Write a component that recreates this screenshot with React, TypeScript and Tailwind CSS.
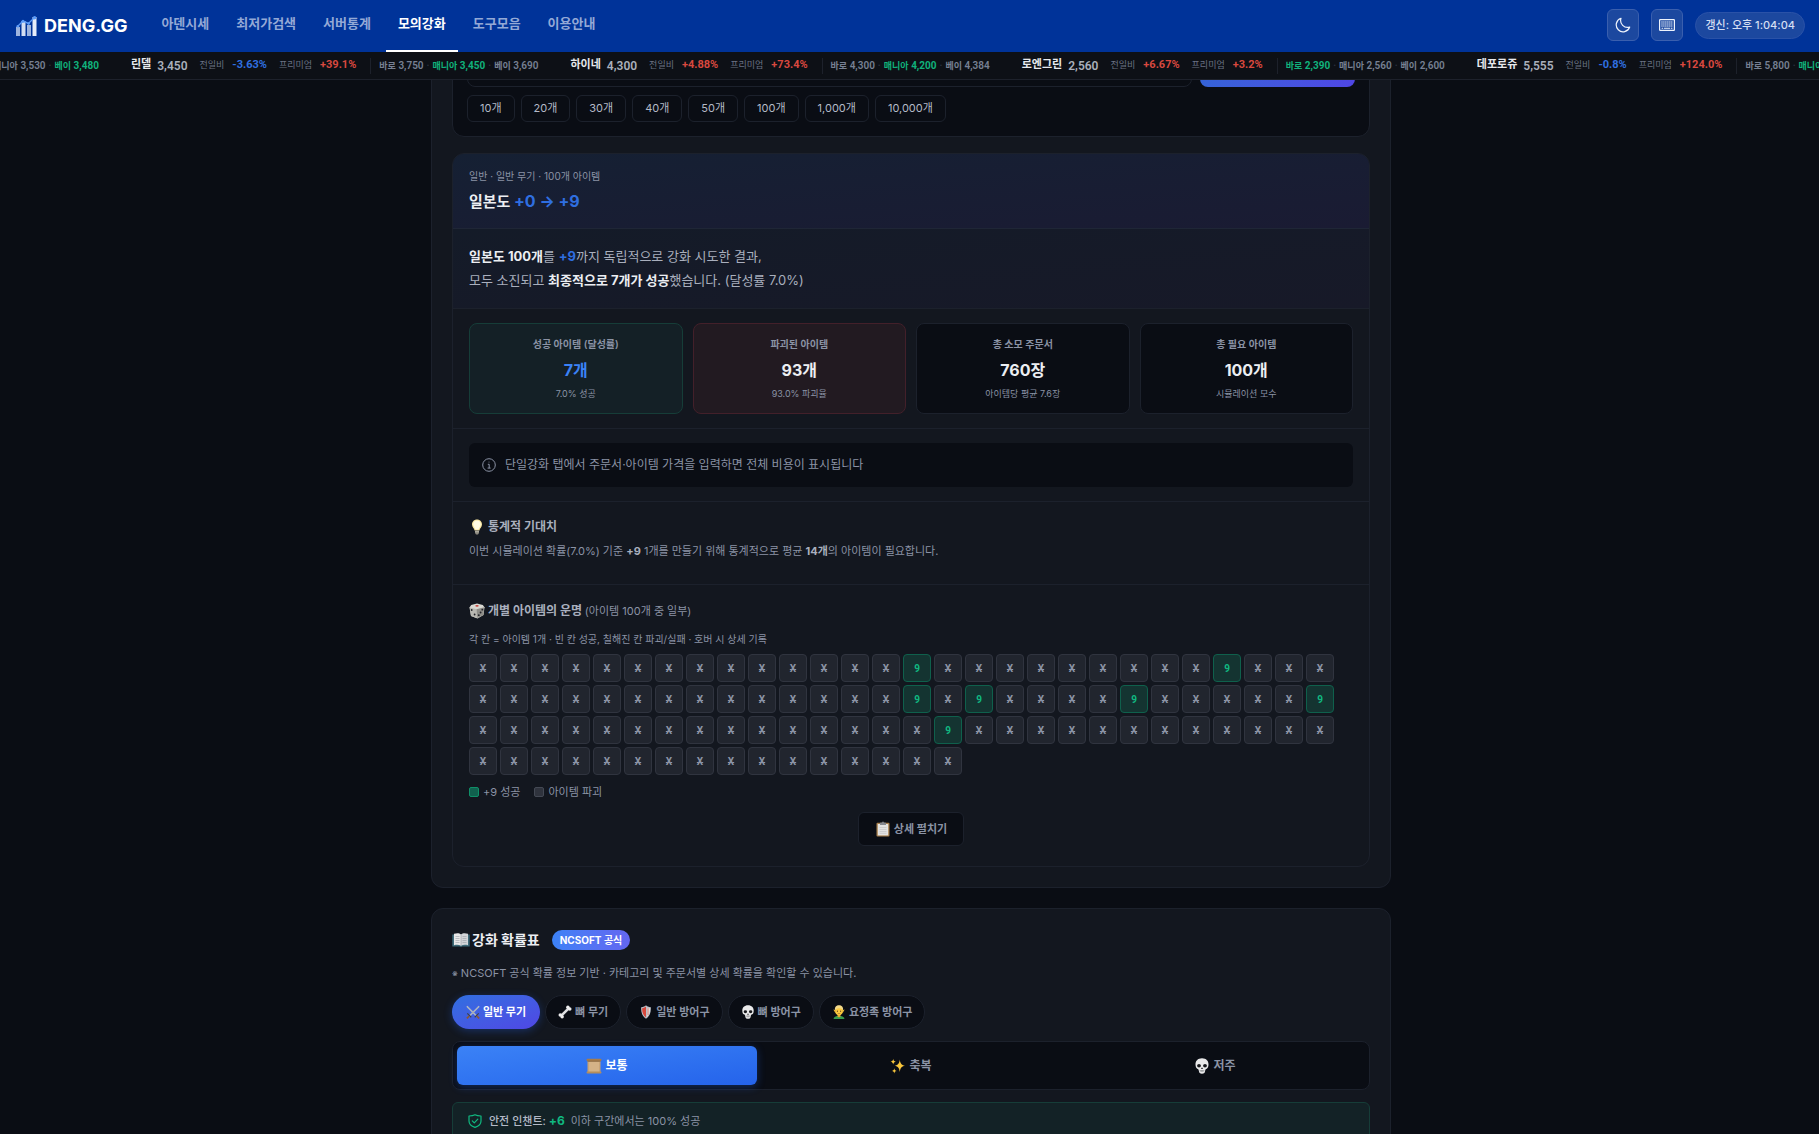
import React from "react";

const UI = "font-['Inter','Noto_Sans_CJK_KR',sans-serif]";
const NARROW = "font-['Roboto','Noto_Sans_CJK_KR',sans-serif]";

function Logo() {
  return (
    <svg viewBox="0 0 21 20" className="h-5 w-[21px]" aria-hidden="true">
      <rect x="0" y="11" width="4" height="9" fill="#9db4de" />
      <rect x="5.5" y="5" width="4" height="15" fill="#d3def2" />
      <rect x="11" y="9" width="4" height="11" fill="#9db4de" />
      <rect x="16.5" y="1" width="4" height="19" fill="#e6edf9" />
      <path d="M1.5 10.5 7 5l5.5 2.5L18.5 1.5" fill="none" stroke="#5b9bf8" strokeWidth="1.4" />
      <circle cx="1.8" cy="10.3" r="1.3" fill="#5b9bf8" />
      <circle cx="7" cy="5.2" r="1.5" fill="#5b9bf8" />
      <circle cx="12.6" cy="7.6" r="1.3" fill="#5b9bf8" />
      <circle cx="18.6" cy="1.8" r="1.7" fill="#5b9bf8" />
    </svg>
  );
}

function Moon() {
  return (
    <svg viewBox="0 0 16 16" className="size-4" fill="none" stroke="#eef3fc" strokeWidth="1.2" strokeLinejoin="round" aria-hidden="true">
      <path d="M6 1.3A6.9 6.9 0 1 0 14.7 10 6.9 6.9 0 0 1 6 1.3Z" />
    </svg>
  );
}

function Keyboard() {
  return (
    <svg viewBox="0 0 16 12" className="h-3 w-4" aria-hidden="true">
      <rect x=".6" y=".6" width="14.8" height="10.8" rx=".6" fill="none" stroke="#eef3fc" strokeWidth="1.2" />
      <path d="M2.2 3h11.6M2.2 5h11.6M2.2 7h11.6" stroke="#dfe8f8" strokeWidth="1" strokeDasharray="1.6 .3" />
      <path d="M2.6 9.3h1.6M5 9.3h6M11.8 9.3h1.6" stroke="#eef3fc" strokeWidth="1.1" />
    </svg>
  );
}

function Bulb() {
  return (
    <svg viewBox="0 0 16 16" className="size-4" aria-hidden="true">
      <path d="M8 .5c3 0 5 2.200 5 4.900 0 2.600-2.300 3.800-2.600 6.200H5.600C5.300 9.200 3 8 3 5.400 3 2.700 5 .5 8 .5Z" fill="#f8e6a0" />
      <path d="M8 1.500c2.300 0 3.800 1.700 3.800 3.800S10 8.600 9.500 10.500H6.500C6 8.600 4.200 7.400 4.200 5.300S5.700 1.500 8 1.500Z" fill="#fffbe2" />
      <path d="M6 11.500h4v2.600L9 15.500H7l-1-1.400Z" fill="#8d8a80" />
      <path d="M6 12.700h4" stroke="#d0ccbc" strokeWidth=".6" />
    </svg>
  );
}

function Dice() {
  return (
    <svg viewBox="0 0 16 16" className="size-4" aria-hidden="true">
      <path d="M2.200 2 8 .5 13.800 2 15.500 4.200 14.500 12 8.500 15.500 2 13 .5 4.500Z" fill="#d9d8d2" />
      <path d="M.8 4.400 7.400 6.200 8.300 15.200 2 13Z" fill="#b9b8b2" />
      <path d="M7.400 6.200 15.300 4.200 14.400 12 8.300 15.200Z" fill="#8f8e89" />
      <ellipse cx="8" cy="2.800" rx="1.700" ry=".9" fill="#c5403a" />
      <g fill="#24242a">
        <circle cx="2.700" cy="7" r=".9" /><circle cx="5.600" cy="11.500" r=".9" />
        <circle cx="9.800" cy="12.200" r=".9" /><circle cx="11.600" cy="9.500" r=".9" /><circle cx="13.300" cy="6.700" r=".9" />
      </g>
    </svg>
  );
}

function Clipboard() {
  return (
    <svg viewBox="0 0 16 16" className="size-4" aria-hidden="true">
      <rect x="1.500" y="1.800" width="13" height="13.700" rx="1" fill="#a9814f" />
      <rect x="2.800" y="3" width="10.400" height="11.400" fill="#e3e3e3" />
      <path d="M4.500 6.500h7M4.500 8.500h7M4.500 10.500h7M4.500 12.300h7" stroke="#c4c4c6" strokeWidth=".7" />
      <path d="M5 1.800 7 1.500 8 .3l1 1.200 2 .3v2.200H5Z" fill="#85888f" />
    </svg>
  );
}

function Book() {
  return (
    <svg viewBox="0 0 18 16" className="h-4 w-[18px]" aria-hidden="true">
      <path d="M.3 2.500h17.400v12H10l-1 .8-1-.8H.3Z" fill="#3d6a78" />
      <path d="M2 1.800C5 .8 7.500 1 9 2.500v11.300c-2-1.200-4.500-1.200-7-.5Z" fill="#e8e8e8" />
      <path d="M16 1.800c-3-1-5.500-.8-7 .7v11.300c2-1.200 4.500-1.200 7-.5Z" fill="#d3d5d8" />
      <path d="M9 2.500v11.300M3.500 4.500h4M3.500 6.500h4M3.500 8.500h4M3.500 10.500h4M10.500 4.500h4M10.500 6.500h4M10.500 8.500h4M10.500 10.500h4" stroke="#9b9fa6" strokeWidth=".6" />
    </svg>
  );
}

function Swords() {
  return (
    <svg viewBox="0 0 16 16" className="size-[14px]" aria-hidden="true">
      <path d="M1 1.500 12 12.500M15 1.500 4 12.500" stroke="#c3cad3" strokeWidth="1.700" />
      <path d="M1 1.500 12 12.500M15 1.500 4 12.500" stroke="#6f7a86" strokeWidth=".5" />
      <path d="M1.500 9.500 6 14M14.500 9.500 10 14" stroke="#3c4048" strokeWidth="1.300" />
      <path d="M1 15.300 3.500 12.800M15 15.300l-2.500-2.500" stroke="#8b5a33" strokeWidth="1.900" />
    </svg>
  );
}

function Bone() {
  return (
    <svg viewBox="0 0 16 16" className="size-[14px]" aria-hidden="true">
      <path d="M3.500 12.500 12.500 3.500" stroke="#dfe0e2" strokeWidth="3" />
      <g fill="#eeeeef">
        <circle cx="2.600" cy="11.300" r="2" /><circle cx="4.700" cy="13.500" r="2" />
        <circle cx="11.300" cy="2.600" r="2" /><circle cx="13.500" cy="4.700" r="2" />
      </g>
    </svg>
  );
}

function Shield() {
  return (
    <svg viewBox="0 0 16 16" className="size-[14px]" aria-hidden="true">
      <path d="M2.500 2.500C5 2.500 7 1.500 8 .4c1 1.100 3 2.100 5.500 2.100.5 6-1.500 10.700-5.500 13.100C4 13.200 2 8.500 2.500 2.500Z" fill="#b9bec6" />
      <path d="M3.600 3.600C5.500 3.500 7 2.700 8 1.800v12.400C5 12 3.400 8.500 3.600 3.600Z" fill="#d8473b" />
      <path d="M9.200 3c1 .5 2 .6 3.200.6.200 4.400-1 7.600-3.200 9.700Z" fill="#e8e2df" />
      <path d="M10.300 3.700v8" stroke="#c9685f" strokeWidth="1" />
    </svg>
  );
}

function Skull({ large = false }: { large?: boolean }) {
  return (
    <svg viewBox="0 0 16 16" className={large ? "size-4" : "size-[14px]"} aria-hidden="true">
      <path d="M8 .3c4.300 0 6.700 2.900 6.500 6.500-.1 2-.7 3.300-1.700 3.900-1.200.5-1.500.8-1.700 2.300-.2 1.700-1 2.700-3.100 2.700s-2.900-1-3.100-2.700c-.2-1.500-.5-1.800-1.700-2.300-1-.6-1.600-1.900-1.700-3.900C1.300 3.200 3.700.3 8 .3Z" fill="#e9e9ea" />
      <ellipse cx="5" cy="7.800" rx="1.900" ry="1.700" fill="#16171b" />
      <ellipse cx="11" cy="7.800" rx="1.900" ry="1.700" fill="#16171b" />
      <path d="m8 9.300 1 1.800H7Z" fill="#16171b" />
      <path d="M5.500 12.700h5M7 12v2M8 12v2M9 12v2" stroke="#7b7c80" strokeWidth=".5" />
    </svg>
  );
}

function Elf() {
  return (
    <svg viewBox="0 0 16 16" className="size-[14px]" aria-hidden="true">
      <path d="M1.800 16c.2-2.400 2-3.500 6.200-3.500s6 1.100 6.200 3.500Z" fill="#3a9a4a" />
      <path d="M6.300 10h3.400v3L8 14.300 6.300 13Z" fill="#e5a92e" />
      <path d="M1.500 5 4 6v3.500ZM14.500 5 12 6v3.500Z" fill="#f0b535" />
      <ellipse cx="8" cy="6.800" rx="4.500" ry="5" fill="#fcc93e" />
      <path d="M3.300 6C2.800 2.500 5 .3 8 .3s5.200 2.200 4.700 5.700C11.500 5.500 11 3.800 8 3.800S4.500 5.500 3.300 6Z" fill="#f3d98a" />
      <circle cx="6.200" cy="7" r=".7" fill="#56381c" /><circle cx="9.800" cy="7" r=".7" fill="#56381c" />
      <path d="M6.500 9.500q1.500 1 3 0" fill="none" stroke="#8a5520" strokeWidth=".6" />
    </svg>
  );
}

function Scroll() {
  return (
    <svg viewBox="0 0 16 16" className="size-4" aria-hidden="true">
      <path d="M1.500 2.500h13v12h-13Z" fill="#c9a476" />
      <path d="M3 4h10v10H3Z" fill="#d4b287" />
      <rect x=".5" y=".8" width="15" height="2.300" rx="1" fill="#a67c4c" />
      <rect x=".5" y="13.600" width="15" height="2" rx="1" fill="#b58d5c" />
      <path d="M1.500 3.300h13" stroke="#6e4c28" strokeWidth=".6" />
    </svg>
  );
}

function Sparkles() {
  return (
    <svg viewBox="0 0 16 16" className="size-4" fill="#f9c63c" aria-hidden="true">
      <path d="M9.800 1.500c.5 4 1.500 5.500 5.200 6.300-3.700.8-4.700 2.300-5.200 6.300-.5-4-1.500-5.500-5.200-6.300 3.700-.8 4.700-2.300 5.200-6.300Z" />
      <path d="M3.200.8c.3 1.900.8 2.500 2.600 2.900-1.800.4-2.300 1-2.600 2.900C2.900 4.700 2.400 4.100.6 3.700 2.400 3.300 2.900 2.700 3.200.8ZM4.300 10.300c.3 1.700.7 2.200 2.300 2.600-1.600.4-2 .9-2.300 2.600-.3-1.700-.7-2.200-2.300-2.600 1.600-.4 2-.9 2.300-2.600Z" />
    </svg>
  );
}

function InfoIcon() {
  return (
    <svg viewBox="0 0 14 14" className="size-[14px]" fill="none" stroke="#8b93a5" aria-hidden="true">
      <circle cx="7" cy="7" r="6.300" />
      <path d="M5.800 6.300H7.200v3.800M5.600 10.100h3" />
      <circle cx="7" cy="4" r=".5" fill="#8b93a5" stroke="none" />
    </svg>
  );
}

function SafeIcon() {
  return (
    <svg viewBox="0 0 14 14" className="size-[14px]" fill="none" stroke="#10b981" strokeLinejoin="round" aria-hidden="true">
      <path d="M7 .8c1.800 1 3.800 1.200 6 1.200v5c0 3-2.200 5.200-6 6.400C3.200 12.200 1 10 1 7V2c2.200 0 4.200-.2 6-1.200Z" strokeWidth="1.200" />
      <path d="m4.300 6.800 2 2 3.500-3.600" strokeWidth="1.200" strokeLinecap="round" />
    </svg>
  );
}

const NAV = ["아덴시세", "최저가검색", "서버통계", "모의강화", "도구모음", "이용안내"];

function Header() {
  return (
    <header className="flex h-[52px] items-stretch bg-[#003399] pr-[14px] pl-4">
      <a href="#home" className="flex items-center gap-[7px] text-lg font-bold text-white">
        <Logo />
        DENG.GG
      </a>
      <nav className="ml-[22px] flex gap-[3px]">
        {NAV.map((item) => (
          <a
            key={item}
            href={`#${item}`}
            className={
              item === "모의강화"
                ? "flex items-center border-b-2 border-white px-3 pt-[2px] pb-1 text-[13px] font-bold text-white"
                : "flex items-center border-b-2 border-transparent px-3 pt-[2px] pb-1 text-[13px] font-semibold text-[#94a9d6]"
            }
          >
            {item}
          </a>
        ))}
      </nav>
      <div className="ml-auto flex items-center gap-3 pb-[2px]">
        <button aria-label="다크 모드" className="flex size-8 items-center justify-center rounded-md border border-[#3a5fae] bg-[#1c489f]">
          <Moon />
        </button>
        <button aria-label="단축키" className="flex size-8 items-center justify-center rounded-md border border-[#3a5fae] bg-[#1c489f]">
          <Keyboard />
        </button>
        <span className="flex h-[27px] items-center rounded-full border border-[#2a52a8] bg-[#1c489f] px-[9px] text-[11px] font-medium text-[#d5dff2]">
          갱신: 오후 1:04:04
        </span>
      </div>
    </header>
  );
}

type Tick = { name: string; price: string; day: string; premium: string; shops: [string, string][]; best: number };

const TICKS: Tick[] = [
  { name: "린델", price: "3,450", day: "-3.63%", premium: "+39.1%", shops: [["바로", "3,750"], ["매니아", "3,450"], ["베이", "3,690"]], best: 1 },
  { name: "하이네", price: "4,300", day: "+4.88%", premium: "+73.4%", shops: [["바로", "4,300"], ["매니아", "4,200"], ["베이", "4,384"]], best: 1 },
  { name: "로엔그린", price: "2,560", day: "+6.67%", premium: "+3.2%", shops: [["바로", "2,390"], ["매니아", "2,560"], ["베이", "2,600"]], best: 0 },
  { name: "데포로쥬", price: "5,555", day: "-0.8%", premium: "+124.0%", shops: [["바로", "5,800"], ["매니아", "5,555"]], best: 1 },
];

function Shops({ shops, best }: { shops: [string, string][]; best: number }) {
  return (
    <span className="flex items-center gap-[3px] text-[10px] font-semibold text-[#778093]">
      {shops.map(([shop, value], i) => (
        <React.Fragment key={shop}>
          {i > 0 && <span className="text-[#2b3240]">·</span>}
          <span className={i === best ? "font-bold text-[#10b27c]" : ""}>
            <span className="text-[9px]">{shop}</span> {value}
          </span>
        </React.Fragment>
      ))}
    </span>
  );
}

function Percent({ value }: { value: string }) {
  return <span className={value.startsWith("-") ? "text-[11px] font-bold text-[#2f6fe0]" : "text-[11px] font-bold text-[#d8483f]"}>{value}</span>;
}

function Ticker() {
  return (
    <div className={`flex h-7 items-center overflow-hidden border-b border-[#1d212b] bg-[#0d1016] whitespace-nowrap ${NARROW}`}>
      <div className="flex w-full shrink-0 items-center gap-8">
        <div className="flex w-[99px] shrink-0 justify-end">
          <Shops shops={[["매니아", "3,530"], ["베이", "3,480"]]} best={1} />
        </div>
        {TICKS.map((t) => (
          <div key={t.name} className="flex shrink-0 items-center">
            <span className="text-[11px] font-bold text-[#e8eaee]">{t.name}</span>
            <span className="ml-[6px] text-xs font-semibold text-[#a9afbb]">{t.price}</span>
            <span className="mr-2 ml-3 text-[9px] text-[#6a7284]">전일비</span>
            <Percent value={t.day} />
            <span className="mr-2 ml-3 text-[9px] text-[#6a7284]">프리미엄</span>
            <Percent value={t.premium} />
            <span className="mr-2 ml-[14px] h-4 border-l border-[#1d212b]" />
            <Shops shops={t.shops} best={t.best} />
          </div>
        ))}
      </div>
    </div>
  );
}

function QuantityForm() {
  return (
    <div className="rounded-xl border border-[#1c212c] bg-[#0a0d14] p-[14px]">
      <div className="flex gap-2">
        <input aria-label="아이템 개수" type="text" className="h-9 min-w-0 flex-1 rounded-lg border border-[#1c212c] bg-[#0a0d14] px-3 text-[13px] text-white" />
        <button aria-label="시뮬레이션 시작" className="h-9 w-[155px] rounded-lg bg-linear-to-r from-[#3563d8] to-[#4f46e5]" />
      </div>
      <div className="mt-2 flex flex-wrap gap-[6px]">
        {["10개", "20개", "30개", "40개", "50개", "100개", "1,000개", "10,000개"].map((n) => (
          <button key={n} className="h-[27px] rounded-md border border-[#1c212c] px-3 text-[11px] text-[#b4bac7]">
            {n}
          </button>
        ))}
      </div>
    </div>
  );
}

const STATS = [
  { label: "성공 아이템 (달성률)", value: "7개", sub: "7.0% 성공", box: "border-[#163d38] bg-[#142026]", color: "text-[#3b82f6]" },
  { label: "파괴된 아이템", value: "93개", sub: "93.0% 파괴율", box: "border-[#43202a] bg-[#221a21]", color: "text-[#eceef2]" },
  { label: "총 소모 주문서", value: "760장", sub: "아이템당 평균 7.6장", box: "border-[#1c212c] bg-[#0a0d14]", color: "text-[#eceef2]" },
  { label: "총 필요 아이템", value: "100개", sub: "시뮬레이션 모수", box: "border-[#1c212c] bg-[#0a0d14]", color: "text-[#eceef2]" },
];

const SUCCESS = new Set([14, 24, 42, 44, 49, 55, 71]);
const CELLS = Array.from({ length: 100 }, (_, i) => SUCCESS.has(i));

function Result() {
  return (
    <section className="mt-4 overflow-hidden rounded-xl border border-[#1c212c] bg-[#13171f]">
      <div className="flex h-[75px] flex-col border-b border-[#1f2636] bg-linear-to-br from-[#152033] to-[#1a1b33] px-4 pt-[14px]">
        <p className="text-[10px] leading-4 text-[#8b93a5]">일반 · 일반 무기 · 100개 아이템</p>
        <h2 className="mt-[5px] text-[15px] leading-6 font-bold text-[#eceef2]">
          일본도 <span className="text-base text-[#2f6fe0]">+0 → +9</span>
        </h2>
      </div>
      <div className="border-b border-[#1c212c] bg-linear-to-br from-[#141b28] to-[#171928] px-4 pt-[15px] pb-4 text-[13px] leading-6 text-[#a9afbd]">
        <p>
          <strong className="text-[#eceef2]">일본도 100개</strong>를 <strong className="text-[#2f6fe0]">+9</strong>까지 독립적으로 강화 시도한 결과,
        </p>
        <p>
          모두 소진되고 <strong className="text-[#eceef2]">최종적으로 7개가 성공</strong>했습니다. (달성률 7.0%)
        </p>
      </div>
      <div className="grid grid-cols-4 gap-[10px] border-b border-[#1c212c] px-4 py-[14px]">
        {STATS.map((s) => (
          <div key={s.label} className={`flex h-[91px] flex-col items-center rounded-lg border pt-3 ${s.box}`}>
            <p className="text-[10px] leading-4 font-semibold text-[#8b93a5]">{s.label}</p>
            <p className={`mt-[6px] text-base leading-6 font-bold ${s.color}`}>{s.value}</p>
            <p className="mt-1 text-[9px] leading-4 text-[#8b93a5]">{s.sub}</p>
          </div>
        ))}
      </div>
      <div className="border-b border-[#1c212c] px-4 py-[14px]">
        <p className="flex h-11 items-center gap-[9px] rounded-md bg-[#0a0d14] px-[13px] text-xs text-[#8b93a5]">
          <InfoIcon />
          단일강화 탭에서 주문서·아이템 가격을 입력하면 전체 비용이 표시됩니다
        </p>
      </div>
      <div className="h-[83px] border-b border-[#1c212c] px-4 pt-[17px]">
        <h3 className="flex items-center gap-[3px] text-xs leading-4 font-bold text-[#a9afbd]">
          <Bulb />
          통계적 기대치
        </h3>
        <p className="mt-2 text-[11px] leading-4 text-[#8b93a5]">
          이번 시뮬레이션 확률(7.0%) 기준 <strong className="text-[#a9afbd]">+9</strong> 1개를 만들기 위해 통계적으로 평균{" "}
          <strong className="text-[#a9afbd]">14개</strong>의 아이템이 필요합니다.
        </p>
      </div>
      <div className="px-4 pt-[18px] pb-5">
        <h3 className="flex items-center gap-[3px] text-xs leading-4 font-bold text-[#a9afbd]">
          <Dice />
          <span>
            개별 아이템의 운명 <span className="text-[11px] font-normal text-[#8b93a5]">(아이템 100개 중 일부)</span>
          </span>
        </h3>
        <p className="mt-3 text-[10px] leading-4 text-[#8b93a5]">각 칸 = 아이템 1개 · 빈 칸 성공, 칠해진 칸 파괴/실패 · 호버 시 상세 기록</p>
        <div className={`mt-[7px] flex flex-wrap gap-[3px] ${NARROW}`}>
          {CELLS.map((ok, i) => (
            <span
              key={i}
              className={
                ok
                  ? "flex size-7 items-center justify-center rounded border border-[#0f604c] bg-[#143431] text-[10px] font-bold text-[#10b981]"
                  : "flex size-7 items-center justify-center rounded border border-[#30343f] bg-[#21252e] text-[10px] font-bold text-[#8b93a5] line-through"
              }
            >
              {ok ? "9" : "X"}
            </span>
          ))}
        </div>
        <div className="mt-[9px] flex gap-[14px] text-[11px] leading-4 text-[#8b93a5]">
          <span className="flex items-center gap-1">
            <span className="size-[10px] rounded-xs border border-[#0f8f68] bg-[#11614e]" />
            +9 성공
          </span>
          <span className="flex items-center gap-1">
            <span className="size-[10px] rounded-xs border border-[#444954] bg-[#2f333d]" />
            아이템 파괴
          </span>
        </div>
        <div className="mt-3 flex justify-center">
          <button className="flex h-[34px] items-center gap-[3px] rounded-md border border-[#1c212c] bg-[#0a0d14] px-4 text-[11px] font-semibold text-[#8b93a5]">
            <Clipboard />
            상세 펼치기
          </button>
        </div>
      </div>
    </section>
  );
}

const CATEGORIES = [
  { label: "일반 무기", icon: <Swords /> },
  { label: "뼈 무기", icon: <Bone /> },
  { label: "일반 방어구", icon: <Shield /> },
  { label: "뼈 방어구", icon: <Skull /> },
  { label: "요정족 방어구", icon: <Elf /> },
];

const SCROLLS = [
  { label: "보통", icon: <Scroll /> },
  { label: "축복", icon: <Sparkles /> },
  { label: "저주", icon: <Skull large /> },
];

function RateTable() {
  return (
    <section className="mt-5 rounded-xl border border-[#1c212c] bg-[#13171f] px-5 pt-[21px] pb-5">
      <div className="flex h-5 items-center gap-3">
        <h2 className="flex items-center gap-[2px] text-sm font-bold text-[#eceef2]">
          <Book />
          강화 확률표
        </h2>
        <span className="flex h-5 items-center rounded-full bg-linear-to-r from-[#3b82f6] to-[#6366f1] px-2 text-[10px] font-bold text-white">
          NCSOFT 공식
        </span>
      </div>
      <p className="mt-[15px] text-[11px] leading-4 text-[#8b93a5]">
        <span className="text-[9px]">※</span> NCSOFT 공식 확률 정보 기반 · 카테고리 및 주문서별 상세 확률을 확인할 수 있습니다.
      </p>
      <div className="mt-[13px] flex flex-wrap gap-[5px]">
        {CATEGORIES.map((c, i) => (
          <button
            key={c.label}
            className={
              i === 0
                ? "flex h-[34px] items-center gap-[3px] rounded-full bg-linear-to-br from-[#2f6fe0] to-[#4f46e5] px-[14px] text-[11px] font-bold text-white shadow-[0_2px_8px_#2563eb55]"
                : "flex h-[34px] items-center gap-[3px] rounded-full border border-[#1c212c] bg-[#0a0d14] px-3 text-[11px] font-semibold text-[#8b93a5]"
            }
          >
            {c.icon}
            {c.label}
          </button>
        ))}
      </div>
      <div className="mt-3 grid grid-cols-3 gap-1 rounded-lg border border-[#1c212c] bg-[#0a0d14] p-1">
        {SCROLLS.map((s, i) => (
          <button
            key={s.label}
            className={
              i === 0
                ? "flex h-[39px] items-center justify-center gap-[3px] rounded-md bg-linear-to-br from-[#3b82f6] to-[#2563eb] text-xs font-bold text-white shadow-[0_2px_8px_#2563eb55]"
                : "flex h-[39px] items-center justify-center gap-[3px] rounded-md text-xs font-semibold text-[#8b93a5]"
            }
          >
            {s.icon}
            {s.label}
          </button>
        ))}
      </div>
      <p className="mt-3 flex h-[38px] items-center rounded-md border border-[#163d38] bg-[#132226] px-[15px] text-[11px] text-[#8b93a5]">
        <SafeIcon />
        <span className="ml-[7px] text-[11px] font-medium text-[#b4bac7]">
          안전 인챈트: <strong className="text-xs text-[#10b981]">+6</strong>
        </span>
        <span className="ml-[6px]">이하 구간에서는 100% 성공</span>
      </p>
    </section>
  );
}

export default function App() {
  return (
    <div className={`h-screen overflow-hidden bg-[#0a0d14] ${UI}`}>
      <div className="relative z-10">
        <Header />
        <Ticker />
      </div>
      <main className="mx-auto -mt-[65px] w-full max-w-[963px] pl-[3px]">
        <section className="rounded-xl border border-[#1c212c] bg-[#13171f] p-5">
          <QuantityForm />
          <Result />
        </section>
        <RateTable />
      </main>
    </div>
  );
}
